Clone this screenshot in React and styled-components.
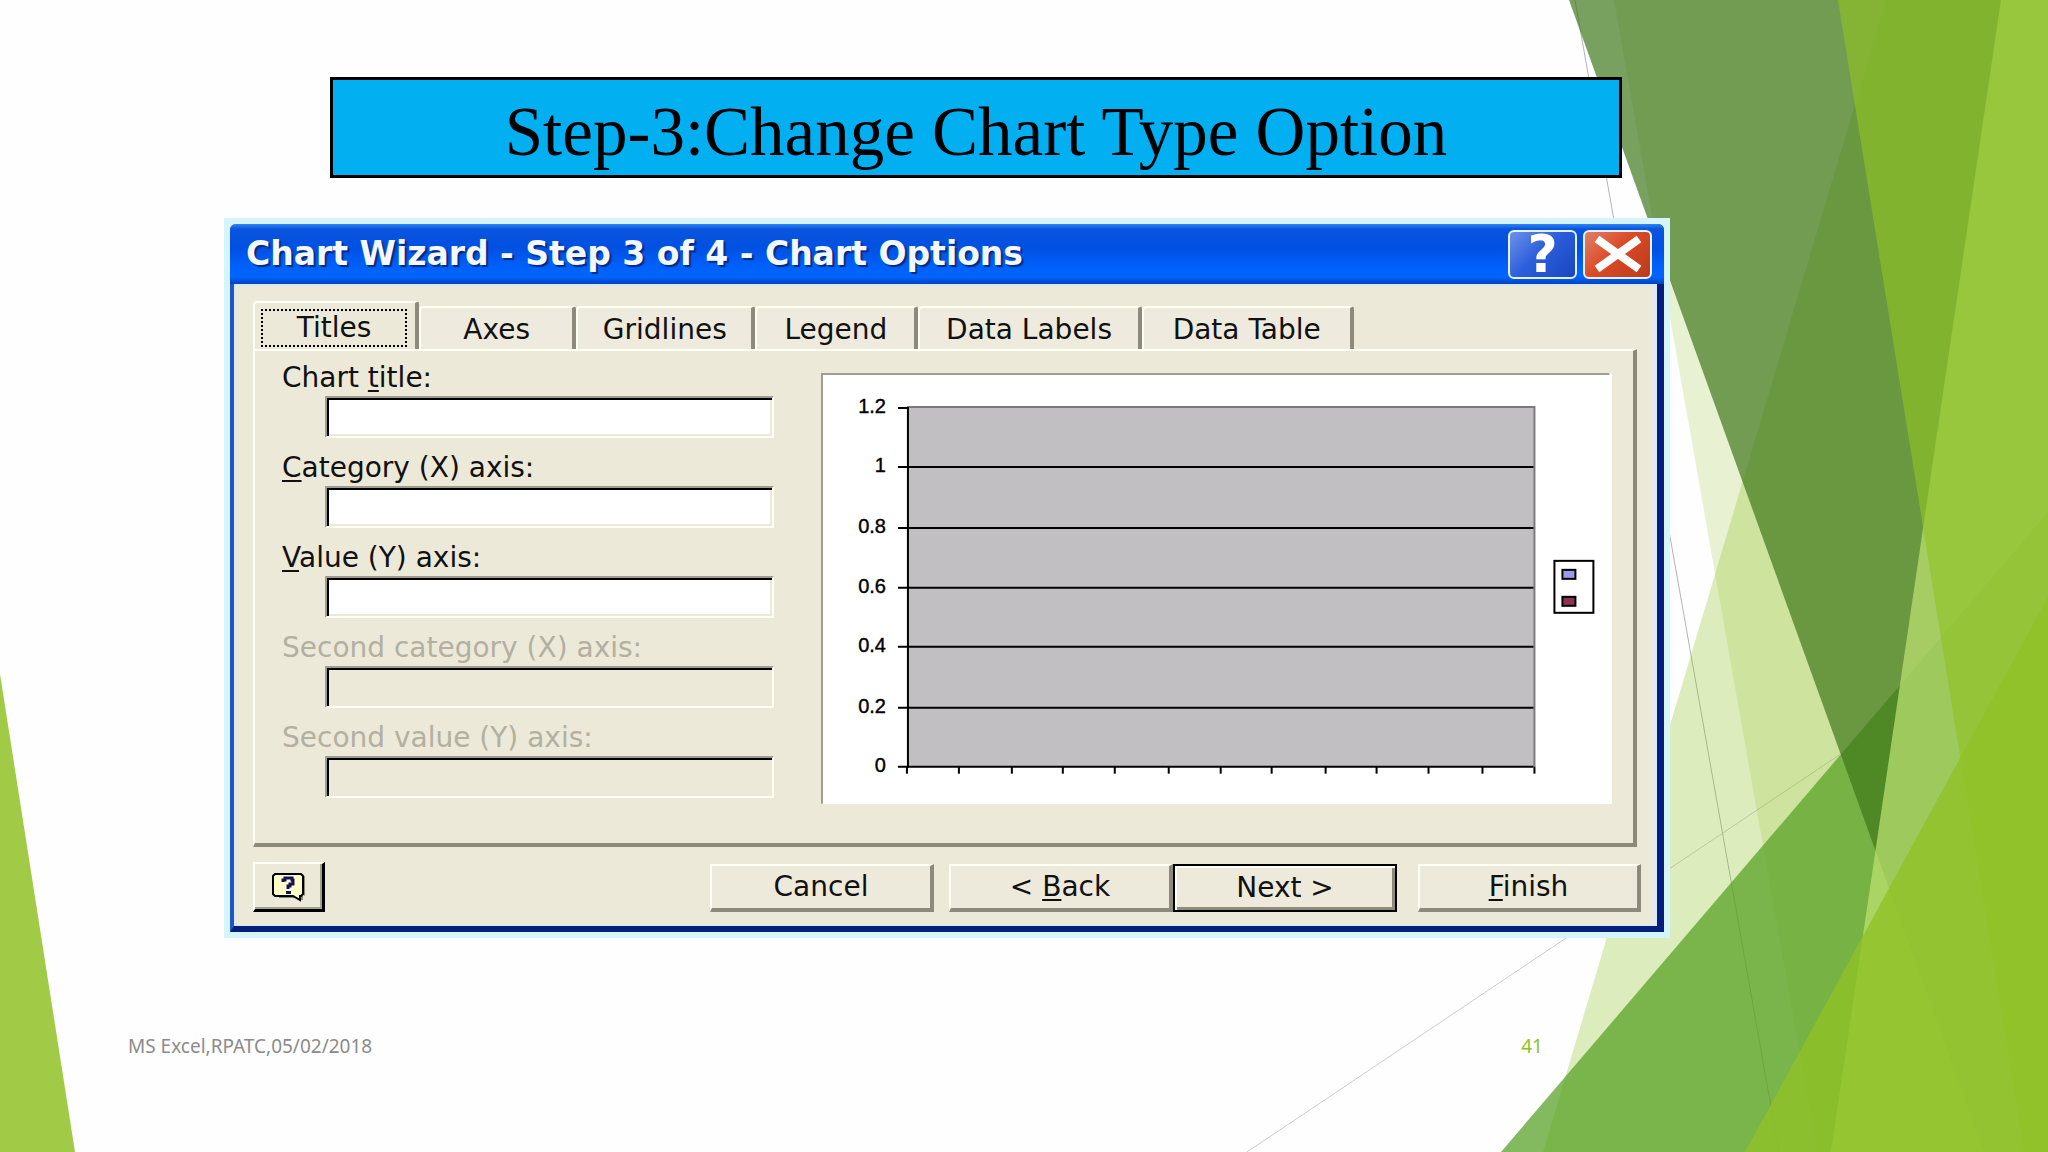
import React, { useState } from "react";
import styled, { createGlobalStyle } from "styled-components";

const GlobalStyle = createGlobalStyle`
  *, *::before, *::after {
    box-sizing: border-box;
  }
  body {
    margin: 0;
    background-color: #fefefe;
  }
`;

const uiFont = `"DejaVu Sans", Verdana, sans-serif`;

const Slide = styled.div`
  position: relative;
  display: flex;
  flex-direction: column;
  min-height: 100vh;
  padding: 77px 0 80px;
  overflow: hidden;
`;

const Backdrop = styled.svg`
  position: absolute;
  inset: 0;
  width: 100%;
  height: 100%;
  z-index: -1;
`;

// one horizontal band of the slide, content sits in the middle column
const Band = styled.div`
  display: grid;
  grid-template-columns:
    minmax(0, ${(props) => props.$left}fr) minmax(0, ${(props) => props.$width}fr)
    minmax(0, ${(props) => props.$right}fr);
  & > * {
    grid-column: 2;
  }
`;

const Banner = styled.h1`
  margin: 0 0 40px;
  padding-top: 10px;
  height: 101px;
  border: 3px solid #000;
  background-color: #02b0f2;
  color: #000;
  font-family: "Liberation Serif", "Times New Roman", serif;
  font-size: 69px;
  font-weight: 400;
  line-height: 85px;
  text-align: center;
`;

const Halo = styled.div`
  padding: 6px;
  background-color: #d6f4fb;
`;

const Dialog = styled.section`
  border: solid #0a2a9c;
  border-width: 0 7px 6px 4px;
  border-left-color: #1f57c8;
  border-bottom-color: #04207a;
  border-right-color: #04207a;
  border-radius: 6px 6px 0 0;
  background-color: #ece9d8;
  font-family: ${uiFont};
`;

const TitleBar = styled.header`
  display: flex;
  align-items: center;
  gap: 6px;
  height: 60px;
  margin: 0 -7px 0 -4px;
  padding: 0 12px 0 16px;
  border-radius: 6px 6px 0 0;
  background: linear-gradient(
    #2f86f5 0,
    #0a55dd 5px,
    #0050e2 40%,
    #0060fb 70%,
    #0066ff 88%,
    #0340c0 100%
  );
`;

const DialogTitle = styled.h2`
  flex: 1;
  margin: 0;
  color: #f2f8ff;
  font-size: 33px;
  font-weight: 700;
  line-height: 60px;
  white-space: nowrap;
  text-shadow: 2px 2px 1px #0a2a80;
`;

const CaptionButton = styled.button`
  display: flex;
  align-items: center;
  justify-content: center;
  width: 69px;
  height: 49px;
  padding: 0;
  border: 2px solid #e4f4ff;
  border-radius: 6px;
  background: ${(props) =>
    props.$danger
      ? "linear-gradient(135deg, #e0806a, #dc4a25 45%, #b83c1c)"
      : "linear-gradient(135deg, #6c92ea, #2c5fdc 45%, #1a46c0)"};
  color: #fff;
  font-family: ${uiFont};
  font-size: 52px;
  font-weight: 700;
  line-height: 44px;
`;

const Body = styled.div`
  padding: 15px 17px 12px 17px;
  border: solid #dce9fb;
  border-width: 2px 3px 2px 2px;
  background-color: #ece9d8;
`;

const TabList = styled.div`
  display: grid;
  grid-template-columns: 166fr 157fr 179fr 163fr 223fr 212fr 283fr;
  align-items: end;
  height: 48px;
`;

const Tab = styled.button`
  height: ${(props) => (props.$active ? 48 : 43)}px;
  padding: ${(props) => (props.$active ? "7px 10px 3px 8px" : "3px 8px 0")};
  border: solid #fffff4;
  border-width: 2px 4px 0 2px;
  border-right-color: #8d8a7c;
  border-radius: 4px 3px 0 0;
  background-color: ${(props) => (props.$active ? "#ece9d8" : "#eeeadd")};
  color: #111;
  font-family: ${uiFont};
  font-size: 28px;
  line-height: 34px;
  white-space: nowrap;
  span {
    display: block;
    outline: ${(props) => (props.$active ? "2px dotted #000" : "none")};
    outline-offset: 0;
  }
`;

const Panel = styled.div`
  display: grid;
  grid-template-columns: minmax(0, 492fr) minmax(0, 792fr);
  gap: 47px;
  height: 498px;
  padding: 9px 21px 0 27px;
  border: solid #fffff4;
  border-width: 2px 4px 4px 2px;
  border-right-color: #8d8a7c;
  border-bottom-color: #8d8a7c;
`;

const Fields = styled.div`
  display: flex;
  flex-direction: column;
  gap: 12px;
`;

const Field = styled.div`
  display: flex;
  flex-direction: column;
  label {
    color: ${(props) => (props.$disabled ? "#b3b0a1" : "#111")};
    font-size: 28px;
    line-height: 36px;
    white-space: nowrap;
  }
`;

const TextBox = styled.input`
  height: 42px;
  margin-left: 43px;
  padding: 0 8px;
  border: solid #a09d90;
  border-width: 2px;
  border-right-color: #fffff4;
  border-bottom-color: #fffff4;
  border-radius: 0;
  outline: none;
  background-color: #fff;
  box-shadow: inset 2px 2px 0 #000, inset -2px -2px 0 #ece9d8;
  font-family: ${uiFont};
  font-size: 28px;
  &:disabled {
    background-color: #ece9d8;
  }
`;

const Mnemonic = styled.u`
  text-decoration-thickness: 2px;
  text-underline-offset: 3px;
`;

const Preview = styled.svg`
  display: block;
  width: 100%;
  margin-top: 13px;
  background-color: #fff;
`;

const Actions = styled.div`
  display: grid;
  grid-template-columns: 72fr 385fr 224fr 15fr 224fr 224fr 21fr 223fr;
  align-items: end;
  height: 65px;
  margin-right: -4px;
`;

const ActionButton = styled.button`
  grid-column: ${(props) => props.$column};
  height: 48px;
  padding: 0;
  border: solid;
  border-width: ${(props) => (props.$default ? "2px" : "2px 4px 4px 2px")};
  border-color: ${(props) =>
    props.$default ? "#000" : "#fffff4 #8d8a7c #8d8a7c #fffff4"};
  border-radius: 0;
  background-color: #ede9db;
  box-shadow: ${(props) =>
    props.$default
      ? "inset 2px 2px 0 #fffff8, inset -3px -3px 0 #8d8a7c"
      : "none"};
  color: #111;
  font-family: ${uiFont};
  font-size: 28px;
  line-height: 36px;
`;

const HelpButton = styled.button`
  display: flex;
  align-items: center;
  justify-content: center;
  height: 50px;
  padding: 0;
  border: solid #fffff4;
  border-width: 2px 3px 3px 2px;
  border-right-color: #000;
  border-bottom-color: #000;
  border-radius: 0;
  background-color: #ece9d8;
  box-shadow: inset -2px -2px 0 #a3a092;
`;

const Footer = styled.footer`
  display: flex;
  justify-content: space-between;
  margin-top: 95px;
  font-family: "Noto Sans", "Trebuchet MS", sans-serif;
  font-size: 19px;
  line-height: 26px;
  color: #8b8b8b;
`;

const PageNumber = styled.span`
  color: #90c226;
`;

const fields = [
  { id: "chart-title", before: "Chart ", key: "t", after: "itle:" },
  { id: "category-x", before: "", key: "C", after: "ategory (X) axis:" },
  { id: "value-y", before: "", key: "V", after: "alue (Y) axis:" },
  { id: "category-x2", before: "Second category (X) axis:", disabled: true },
  { id: "value-y2", before: "Second value (Y) axis:", disabled: true },
];

const tabs = ["Titles", "Axes", "Gridlines", "Legend", "Data Labels", "Data Table"];

const yTicks = [
  { label: "1.2", y: 35 },
  { label: "1", y: 94 },
  { label: "0.8", y: 155 },
  { label: "0.6", y: 215 },
  { label: "0.4", y: 274 },
  { label: "0.2", y: 335 },
  { label: "0", y: 394 },
];

const xTicks = [86, 138, 191, 242, 294, 348, 400, 451, 505, 556, 608, 662, 714];

function Facets() {
  return (
    <Backdrop viewBox="0 0 2048 1152" preserveAspectRatio="none" aria-hidden="true">
      <path d="M1575 0L1779 1152" stroke="#b4b4b4" strokeWidth="1" />
      <path d="M1247 1152L2048 615" stroke="#cfcacf" strokeWidth="1" />
      <path d="M1886 0H2048V1152H1543Z" fill="#90c226" fillOpacity=".3" />
      <path d="M1614 0H2048V1152H1817Z" fill="#90c226" fillOpacity=".2" />
      <path d="M2048 512V1152H1501Z" fill="#54a021" fillOpacity=".72" />
      <path d="M1569 0H2048V1152H1984Z" fill="#3f7819" fillOpacity=".7" />
      <path d="M2001 0H2048V1152H1831Z" fill="#c0e474" fillOpacity=".7" />
      <path d="M1838 0H2048V1152H2024Z" fill="#90c226" fillOpacity=".65" />
      <path d="M2048 597V1152H1745Z" fill="#90c226" fillOpacity=".8" />
      <path d="M0 674L75 1152H0Z" fill="#90c226" fillOpacity=".85" />
    </Backdrop>
  );
}

function ChartPreview() {
  return (
    <Preview viewBox="0 0 792 431" role="img" aria-label="Chart preview">
      <path d="M1 431V1H789" fill="none" stroke="#a09d90" strokeWidth="2" />
      <rect x="86" y="34" width="628" height="360" fill="#c2bfc2" />
      <path d="M86 34H714V394" fill="none" stroke="#7d7a7d" strokeWidth="2" />
      {yTicks.map((tick, i) => (
        <g key={tick.label}>
          <path
            d={`M77 ${tick.y}H${i === 0 ? 86 : 713}`}
            stroke="#000"
            strokeWidth="2"
          />
          <text
            x="65"
            y={tick.y + 5}
            textAnchor="end"
            fontFamily="Liberation Sans, Arial, sans-serif"
            fontSize="20"
            stroke="#000"
            strokeWidth=".4"
          >
            {tick.label}
          </text>
        </g>
      ))}
      <path d="M87 34V395" stroke="#000" strokeWidth="2" />
      {xTicks.map((x) => (
        <path key={x} d={`M${x} 394V401`} stroke="#000" strokeWidth="2" />
      ))}
      <rect x="734" y="188" width="39" height="52" fill="#fff" stroke="#000" strokeWidth="2" />
      <rect x="742" y="197" width="13" height="9" fill="#9c98ea" stroke="#000" strokeWidth="2" />
      <rect x="742" y="224" width="13" height="9" fill="#8c3350" stroke="#000" strokeWidth="2" />
    </Preview>
  );
}

export default function App() {
  let [activeTab, setActiveTab] = useState("Titles");

  return (
    <>
      <GlobalStyle />
      <Slide>
        <Facets />
        <Band $left={330} $width={1292} $right={426}>
          <Banner>Step-3:Change Chart Type Option</Banner>
        </Band>
        <Band $left={224} $width={1446} $right={378}>
          <Halo>
            <Dialog>
              <TitleBar>
                <DialogTitle>Chart Wizard - Step 3 of 4 - Chart Options</DialogTitle>
                <CaptionButton type="button">?</CaptionButton>
                <CaptionButton type="button" $danger aria-label="Close">
                  <svg width="50" height="38" viewBox="0 0 50 38">
                    <path d="M4 4L46 34M46 4L4 34" stroke="#fff" strokeWidth="8" />
                  </svg>
                </CaptionButton>
              </TitleBar>
              <Body>
                <TabList role="tablist">
                  {tabs.map((tab) => (
                    <Tab
                      key={tab}
                      type="button"
                      role="tab"
                      aria-selected={tab === activeTab}
                      $active={tab === activeTab}
                      onClick={() => setActiveTab(tab)}
                    >
                      <span>{tab}</span>
                    </Tab>
                  ))}
                </TabList>
                <Panel>
                  <Fields>
                    {fields.map((field) => (
                      <Field key={field.id} $disabled={field.disabled}>
                        <label htmlFor={field.id}>
                          {field.before}
                          {field.key && <Mnemonic>{field.key}</Mnemonic>}
                          {field.after}
                        </label>
                        <TextBox id={field.id} type="text" disabled={field.disabled} />
                      </Field>
                    ))}
                  </Fields>
                  <ChartPreview />
                </Panel>
                <Actions>
                  <HelpButton type="button" aria-label="Help">
                    <svg width="36" height="30" viewBox="0 0 36 30">
                      <path d="M6 4H34V24H32V28H28V26H8V24H34Z" fill="#8d8a7c" />
                      <path
                        d="M4 2H30L32 4V22L30 24H29V28L22 24H4L2 22V4Z"
                        fill="#ffffc8"
                        stroke="#000"
                        strokeWidth="2"
                      />
                      <path
                        d="M12 10V8H14V6H21V8H22V12H19V14H17V17"
                        fill="none"
                        stroke="#16105a"
                        strokeWidth="3"
                      />
                      <path d="M15 19H20V22H15Z" fill="#16105a" />
                    </svg>
                  </HelpButton>
                  <ActionButton type="button" $column={3}>
                    Cancel
                  </ActionButton>
                  <ActionButton type="button" $column={5}>
                    &lt; <Mnemonic>B</Mnemonic>ack
                  </ActionButton>
                  <ActionButton type="button" $column={6} $default>
                    Next &gt;
                  </ActionButton>
                  <ActionButton type="button" $column={8}>
                    <Mnemonic>F</Mnemonic>inish
                  </ActionButton>
                </Actions>
              </Body>
            </Dialog>
          </Halo>
        </Band>
        <Band $left={128} $width={1415} $right={505}>
          <Footer>
            <span>MS Excel,RPATC,05/02/2018</span>
            <PageNumber>41</PageNumber>
          </Footer>
        </Band>
      </Slide>
    </>
  );
}
